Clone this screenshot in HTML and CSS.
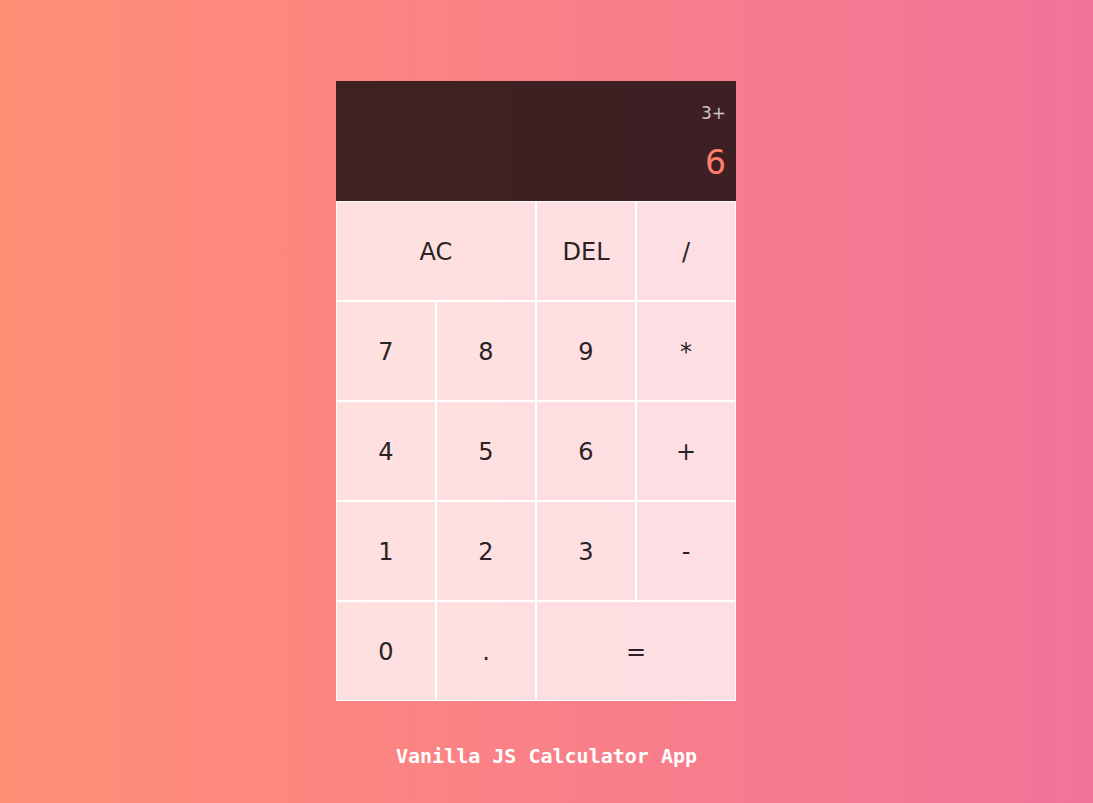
FILE: index.html
```html
<!DOCTYPE html>
<html lang="en">
<head>
<meta charset="UTF-8">
<title>Vanilla JS Calculator App</title>
<link rel="stylesheet" href="styles.css">
</head>
<body>
  <main class="page">
    <div class="calc-wrap">
      <div class="calculator">
        <div class="output">
          <div class="previous">3+</div>
          <div class="current">6</div>
        </div>
        <button class="key span-2">AC</button>
        <button class="key">DEL</button>
        <button class="key">/</button>
        <button class="key">7</button>
        <button class="key">8</button>
        <button class="key">9</button>
        <button class="key">*</button>
        <button class="key">4</button>
        <button class="key">5</button>
        <button class="key">6</button>
        <button class="key">+</button>
        <button class="key">1</button>
        <button class="key">2</button>
        <button class="key">3</button>
        <button class="key">-</button>
        <button class="key">0</button>
        <button class="key">.</button>
        <button class="key span-2">=</button>
      </div>
    </div>
    <footer class="footer">Vanilla JS Calculator App</footer>
  </main>
</body>
</html>
```
FILE: styles.css
```css
* { box-sizing: border-box; }
html, body { margin: 0; height: 100%; }
body {
  background: linear-gradient(to right, #ff8f75, #f3729a);
  font-family: "DejaVu Sans", Verdana, sans-serif;
}
.page {
  display: flex;
  flex-direction: column;
  align-items: center;
  padding-top: 81px;
}
.calc-wrap {
  padding-right: 21px;
}
.calculator {
  display: grid;
  grid-template-columns: repeat(4, 100px);
  grid-template-rows: 120px repeat(5, 100px);
}
.output {
  grid-column: 1 / -1;
  background: rgba(0, 0, 0, 0.75);
  display: flex;
  flex-direction: column;
  align-items: flex-end;
  padding: 22px 10px 0 10px;
}
.previous {
  color: rgba(255, 255, 255, 0.75);
  font-size: 17px;
  line-height: 20px;
}
.current {
  color: #ff7f6c;
  font-size: 33px;
  line-height: 40px;
  margin-top: 20px;
}
.key {
  font-family: "DejaVu Sans", Verdana, sans-serif;
  font-size: 24px;
  color: #2a2224;
  background: rgba(255, 255, 255, 0.75);
  border: 1px solid #fff;
  outline: none;
  cursor: pointer;
  padding: 2px 0 0 0;
}
.span-2 { grid-column: span 2; }
.footer {
  margin-top: 43px;
  color: #fff;
  font-family: "DejaVu Sans Mono", monospace;
  font-weight: bold;
  font-size: 20px;
  line-height: 24px;
}
```
